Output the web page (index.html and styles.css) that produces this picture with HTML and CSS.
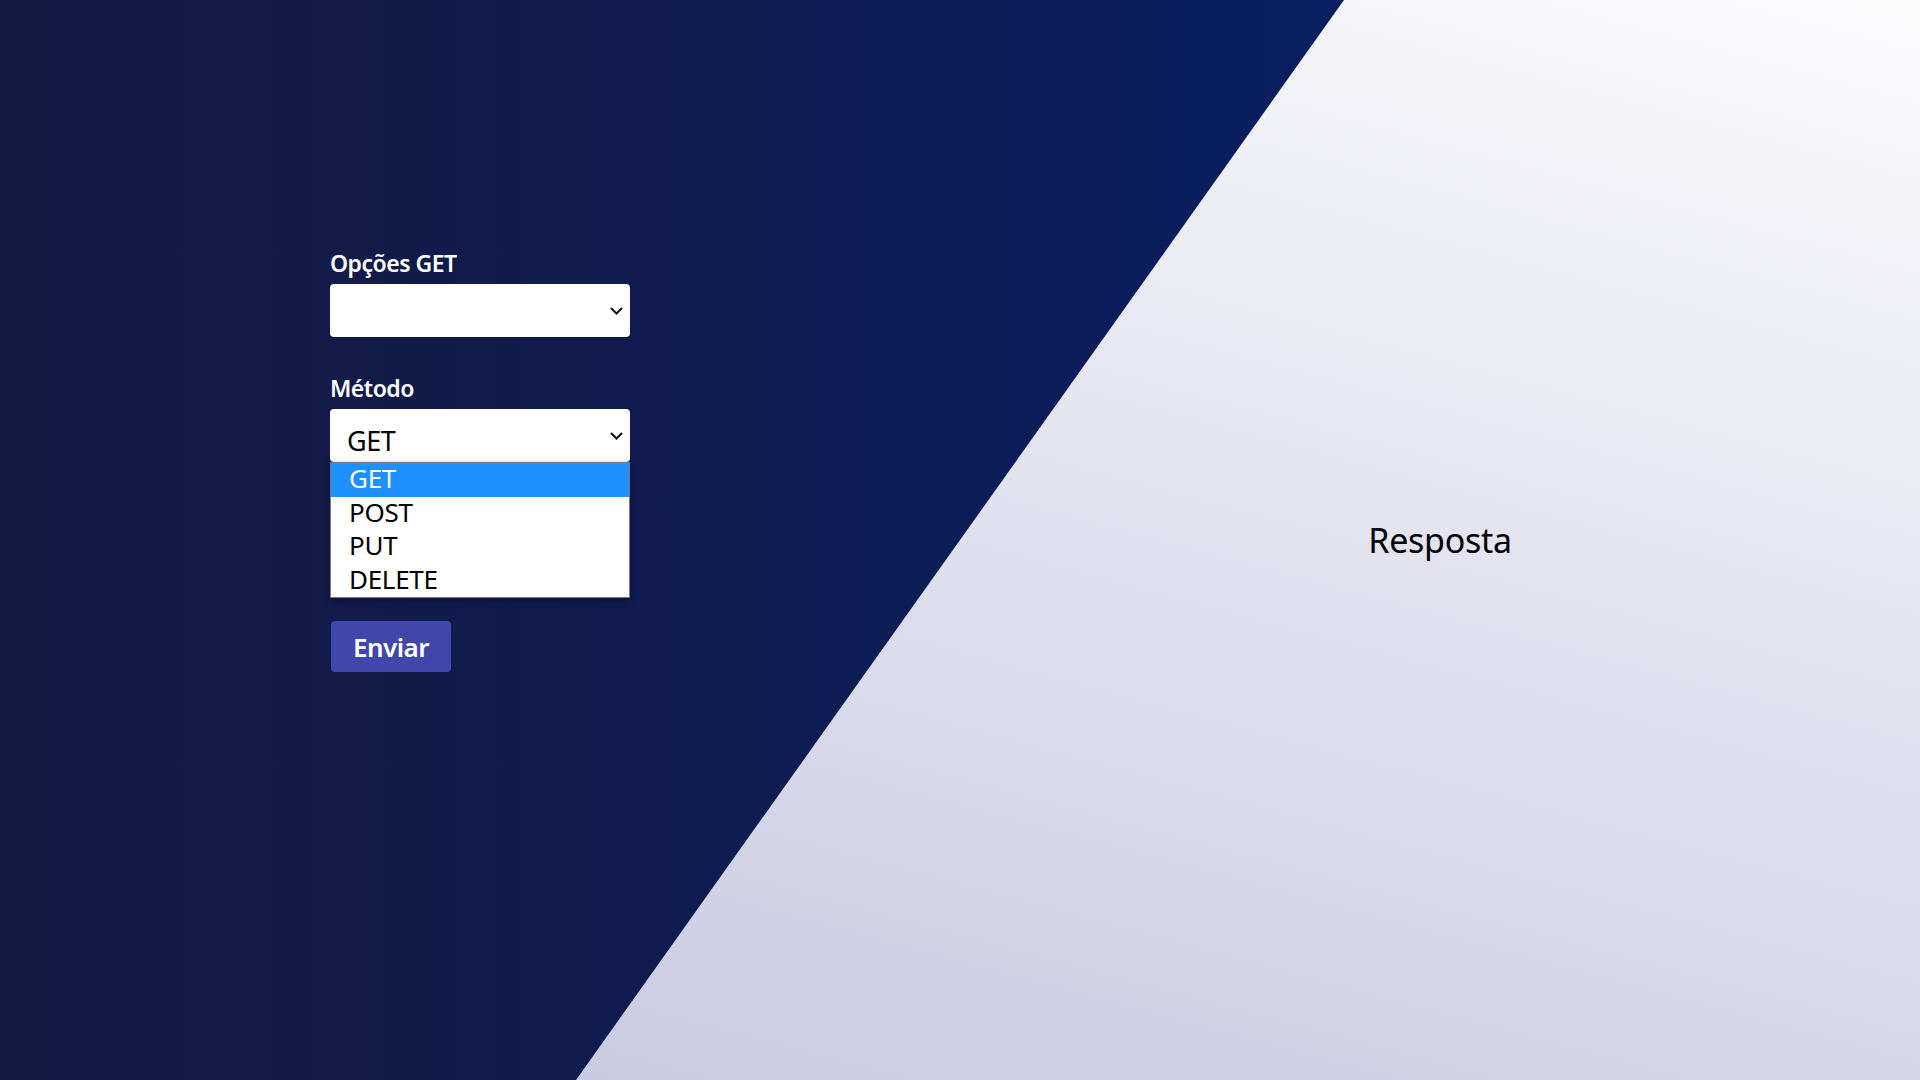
FILE: index.html
```html
<!DOCTYPE html>
<html lang="pt">
<head>
<meta charset="utf-8">
<title>Requisições</title>
<link rel="stylesheet" href="styles.css">
</head>
<body>
<main class="page">
  <section class="panel panel-form">
    <form class="form">
      <label class="label">Opções GET</label>
      <div class="select">
        <span class="select-value"></span>
        <svg class="chevron" width="13" height="8" viewBox="0 0 13 8"><path d="M1 1 L6.5 6.5 L12 1" fill="none" stroke="#111" stroke-width="2"/></svg>
      </div>

      <label class="label label-gap">Método</label>
      <div class="select select-open">
        <span class="select-value">GET</span>
        <svg class="chevron" width="13" height="8" viewBox="0 0 13 8"><path d="M1 1 L6.5 6.5 L12 1" fill="none" stroke="#111" stroke-width="2"/></svg>
        <ul class="dropdown">
          <li class="option option-active">GET</li>
          <li class="option">POST</li>
          <li class="option">PUT</li>
          <li class="option">DELETE</li>
        </ul>
      </div>

      <button type="button" class="button">Enviar</button>
    </form>
  </section>
  <section class="panel panel-response">
    <p class="response">Resposta</p>
  </section>
</main>
</body>
</html>
```

FILE: styles.css
```css
html, body {
  margin: 0;
  padding: 0;
  height: 100%;
}

body {
  font-family: "Noto Sans", "Open Sans", sans-serif;
  overflow: hidden;
}

.page {
  position: relative;
  display: grid;
  grid-template-columns: 1fr 1fr;
  width: 100%;
  height: 100vh;
  background: linear-gradient(195deg, #fbfbfc 0%, #e4e5f0 40%, #c4c5df 100%);
}

.page::before {
  content: "";
  position: absolute;
  inset: 0;
  background: linear-gradient(to right, #151a42 0%, #0f1c50 35%, #071f63 75%);
  clip-path: polygon(0 0, 70% 0, 30% 100%, 0 100%);
  z-index: 0;
}

.panel {
  position: relative;
  z-index: 1;
}

.panel-form {
  display: flex;
  justify-content: center;
  align-items: flex-start;
  padding-top: 248px;
}

.form {
  width: 300px;
  display: flex;
  flex-direction: column;
}

.label {
  color: #ffffff;
  font-size: 23px;
  font-weight: 600;
  line-height: 30px;
  letter-spacing: -0.5px;
  margin-bottom: 6px;
}

.label-gap {
  margin-top: 36px;
}

.select {
  position: relative;
  box-sizing: border-box;
  height: 53px;
  background: #ffffff;
  border-radius: 4px;
  padding: 10px 0 0 17px;
  box-shadow: 0 1px 2px rgba(0, 0, 0, 0.25);
}

.select-value {
  display: block;
  font-size: 27px;
  line-height: 43px;
  color: #000;
  letter-spacing: -0.5px;
}

.chevron {
  position: absolute;
  right: 7px;
  top: 23px;
}

.dropdown {
  position: absolute;
  left: 0;
  top: 53px;
  width: 300px;
  box-sizing: border-box;
  margin: 0;
  padding: 0;
  list-style: none;
  background: #ffffff;
  border: 1px solid #7a7a7a;
  box-shadow: 0 2px 6px rgba(0, 0, 0, 0.35);
  z-index: 5;
}

.option {
  height: 33.5px;
  line-height: 31px;
  padding-left: 18px;
  font-size: 26px;
  color: #000;
  letter-spacing: -0.3px;
}

.option-active {
  background: #1e90ff;
  color: #ffffff;
}

.button {
  align-self: flex-start;
  margin-top: 159px;
  margin-left: 1px;
  width: 120px;
  height: 51px;
  border: none;
  border-radius: 4px;
  background: #3f48aa;
  color: #ffffff;
  font-family: "Noto Sans", "Open Sans", sans-serif;
  font-size: 26px;
  font-weight: 600;
  letter-spacing: -0.5px;
  padding: 0;
  cursor: pointer;
}

.panel-response {
  display: flex;
  justify-content: center;
  align-items: center;
}

.response {
  margin: 0;
  font-size: 34px;
  color: #000;
  letter-spacing: -0.3px;
}
```
